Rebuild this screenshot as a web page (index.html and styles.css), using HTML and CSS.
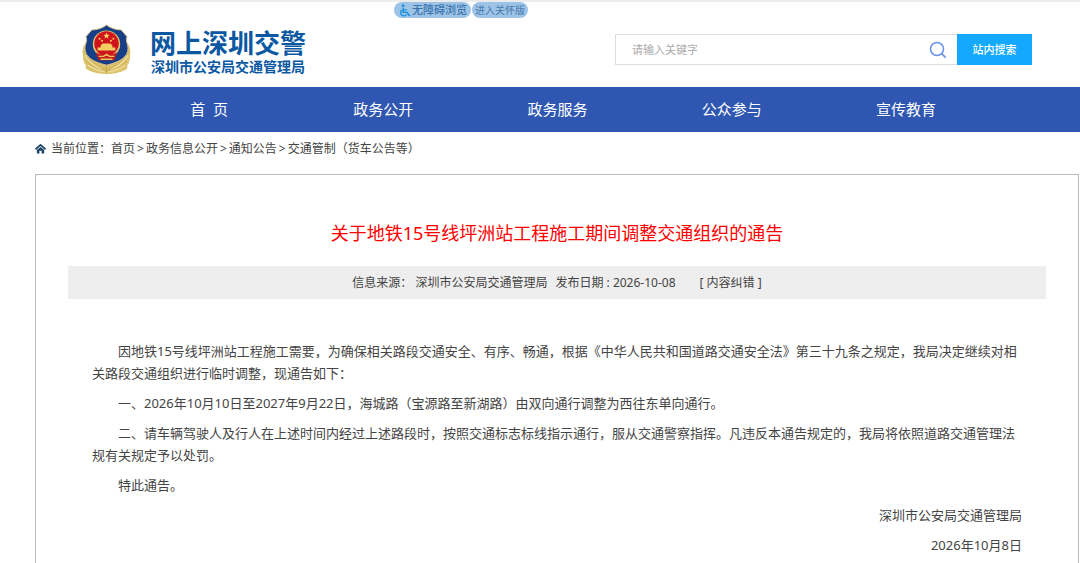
FILE: index.html
```html
<!DOCTYPE html>
<html lang="zh-CN">
<head>
<meta charset="utf-8">
<title>网上深圳交警</title>
<link rel="stylesheet" href="styles.css">
</head>
<body>
<header class="header">
  <div class="tools">
    <button class="pill pill-main" type="button">
      <svg class="pill-icon" viewBox="0 0 12 14" aria-hidden="true">
        <circle cx="4" cy="1.8" r="1.5" fill="#1590e0"/>
        <path d="M4 4v5h4.5l1.7 3.3 1.4-.6M4.3 6.3h3.5" fill="none" stroke="#1590e0" stroke-width="1.5"/>
        <path d="M2.8 6.4a3.5 3.5 0 1 0 5 4.6" fill="none" stroke="#1590e0" stroke-width="1.4"/>
      </svg>无障碍浏览</button>
    <button class="pill" type="button">进入关怀版</button>
  </div>
  <div class="masthead">
    <a class="brand" href="#">
      <svg class="emblem" viewBox="0 0 50 52" aria-hidden="true">
        <path d="M4 19C1 22 0 27 1 32c0 5 1 8 3 10-1 2 0 4 2 5 5 3 12 4 19 4s14-1 19-4c2-1 3-3 2-5 2-2 3-5 3-10 1-5 0-10-3-13z" fill="#dcc36d"/>
        <path d="M3 32c5 8 11 13 22 17 11-4 17-9 22-17M6 42c6 4 12 6 19 7 7-1 13-3 19-7" fill="none" stroke="#efe0a0" stroke-width="1.2"/>
        <path d="M2 28c4 8 12 14 23 18 11-4 19-10 23-18M4 38c6 5 13 9 21 10 8-1 15-5 21-10" fill="none" stroke="#c5a64e" stroke-width=".7"/>
        <path d="M25 1c4 3 9 5 15 5l6 7c-2 4 1 7 1 12 0 9-9 14-22 17C12 39 3 34 3 25c0-5 3-8 1-12l6-7c6 0 11-2 15-5z" fill="#173f88" stroke="#d8c58c" stroke-width="1"/>
        <circle cx="25" cy="20.500" r="14" fill="#e2c66b"/>
        <circle cx="25" cy="20" r="12.500" fill="#cf141d"/>
        <path d="m25 9 .9 2 2.200.2-1.700 1.400.6 2.200-2-1.200-2 1.200.6-2.200-1.700-1.400 2.200-.2z" fill="#ffd95b"/>
        <g fill="#ffd95b"><circle cx="18" cy="15" r="1"/><circle cx="20.500" cy="17" r="1"/><circle cx="29.500" cy="17" r="1"/><circle cx="32" cy="15" r="1"/></g>
        <path d="M19 22l2-2h8l2 2v2h3v3H16v-3h3z" fill="#f3cf61"/>
        <path d="M14 29c6 3 16 3 22 0l-3 8H17z" fill="#c81a1d"/>
        <path d="M17 33h5l3-2 3 2h5M19 36h12" fill="none" stroke="#e8c65f" stroke-width="1.500"/>
        <path d="M25 42v9M20 45l5 4 5-4" fill="none" stroke="#c5a548" stroke-width=".8"/>
      </svg>
      <span class="brand-text">
        <span class="brand-name">网上深圳交警</span>
        <span class="brand-sub">深圳市公安局交通管理局</span>
      </span>
    </a>
    <form class="search" role="search">
      <div class="search-field">
        <input class="search-input" type="text" placeholder="请输入关键字" aria-label="请输入关键字">
        <svg class="search-icon" viewBox="0 0 18 18" aria-hidden="true">
          <circle cx="8" cy="8" r="6.500" fill="none" stroke="#6b92e8" stroke-width="1.500"/>
          <path d="m12.700 12.700 4 4" stroke="#6b92e8" stroke-width="1.700"/>
        </svg>
      </div>
      <button class="search-button" type="button">站内搜索</button>
    </form>
  </div>
</header>
<nav class="nav">
  <a href="#">首&nbsp; 页</a>
  <a href="#">政务公开</a>
  <a href="#">政务服务</a>
  <a href="#">公众参与</a>
  <a href="#">宣传教育</a>
</nav>
<main class="main">
  <div class="crumbs">
    <svg class="home-icon" viewBox="0 0 12 11" aria-hidden="true">
      <path d="M.5 5.800 6 1l5.500 4.800" fill="none" stroke="#1c4567" stroke-width="1.900"/>
      <path d="M2 6.600 6 3.200l4 3.400V10.500H7.200V7.500H4.800v3H2z" fill="#1c4567"/>
    </svg>
    <span>当前位置：</span>
    <a href="#">首页</a><span class="sep">&gt;</span><a href="#">政务信息公开</a><span class="sep">&gt;</span><a href="#">通知公告</a><span class="sep">&gt;</span><a href="#">交通管制（货车公告等）</a>
  </div>
  <article class="article">
    <h1 class="title">关于地铁15号线坪洲站工程施工期间调整交通组织的通告</h1>
    <div class="meta">
      <span>信息来源： 深圳市公安局交通管理局</span>
      <span>发布日期 : 2026-10-08</span>
      <a class="correct" href="#">[ 内容纠错 ]</a>
    </div>
    <div class="content">
      <p>因地铁15号线坪洲站工程施工需要，为确保相关路段交通安全、有序、畅通，根据《中华人民共和国道路交通安全法》第三十九条之规定，我局决定继续对相关路段交通组织进行临时调整，现通告如下：</p>
      <p>一、2026年10月10日至2027年9月22日，海城路（宝源路至新湖路）由双向通行调整为西往东单向通行。</p>
      <p>二、请车辆驾驶人及行人在上述时间内经过上述路段时，按照交通标志标线指示通行，服从交通警察指挥。凡违反本通告规定的，我局将依照道路交通管理法规有关规定予以处罚。</p>
      <p>特此通告。</p>
      <p class="sign">深圳市公安局交通管理局</p>
      <p class="sign">2026年10月8日</p>
    </div>
  </article>
</main>
</body>
</html>
```
FILE: styles.css
```css
* { box-sizing: border-box; }

body {
  margin: 0;
  background: #fff;
  color: #444;
  font: 12px/16px "Noto Sans", "Noto Sans CJK SC", sans-serif;
}

a { color: inherit; text-decoration: none; }
button, input { font-family: inherit; }

.header { border-top: 2px solid #ececec; }

.tools {
  display: flex;
  justify-content: center;
  gap: 1px;
  padding-right: 158px;
}

.pill {
  display: flex;
  align-items: center;
  height: 16px;
  padding: 0 3px;
  border: 0;
  border-radius: 8px;
  background: #9dc3e6;
  color: #4679ac;
  font-size: 10px;
  line-height: 16px;
}

.pill-main {
  padding: 0 4px 0 5px;
  color: #3a74ad;
  font-size: 11px;
  font-weight: 500;
}

.pill-icon { width: 12px; height: 13px; margin-right: 1px; }

.masthead {
  display: flex;
  align-items: center;
  justify-content: space-between;
  height: 69px;
  padding: 0 48px 6px 82px;
}

.brand { display: flex; align-items: center; gap: 19px; }
.emblem { width: 49px; height: 51px; }

.brand-text {
  display: flex;
  flex-direction: column;
  color: #0b58a2;
  font-family: "Noto Sans CJK SC", sans-serif;
  font-weight: 700;
  white-space: nowrap;
}

.brand-name { font-size: 26px; line-height: 32px; }
.brand-sub { padding-left: 1px; font-size: 14px; line-height: 16px; }

.search { display: flex; width: 417px; height: 31px; }

.search-field {
  display: flex;
  flex: 1;
  align-items: center;
  padding: 0 10px 0 16px;
  border: 1px solid #ddd;
  border-right: 0;
}

.search-input {
  flex: 1;
  min-width: 0;
  padding: 0;
  border: 0;
  outline: 0;
  background: none;
  font-size: 11px;
}

.search-input::placeholder { color: #aaa; }
.search-icon { width: 18px; height: 18px; }

.search-button {
  width: 75px;
  padding: 0 0 2px;
  border: 0;
  background: #14a9ff;
  color: #fff;
  font-size: 11px;
  font-weight: 500;
}

.nav {
  display: flex;
  height: 45px;
  padding: 0 87px 0 122px;
  background: #2f57b1;
  color: #fff;
  font-size: 15px;
  line-height: 45px;
  text-align: center;
}

.nav a { flex: 1; white-space: pre; }

.main { padding: 0 1px 0 35px; }

.crumbs {
  display: flex;
  align-items: center;
  height: 42px;
  padding-bottom: 8px;
}

.home-icon { width: 11px; height: 10px; margin-right: 5px; }
.sep { margin: 0 2px; }

.article {
  min-height: 400px;
  padding: 46px 32px 0;
  border: 1px solid #bbb;
  border-bottom: 0;
}

.title {
  margin: 0;
  color: #f00;
  font-size: 18px;
  font-weight: 400;
  line-height: 24px;
  text-align: center;
}

.meta {
  display: flex;
  justify-content: center;
  gap: 8px;
  margin-top: 21px;
  background: #eee;
  line-height: 33px;
}

.correct { margin-left: 16px; }

.content {
  padding: 41px 24px 0;
  font-size: 13px;
  line-height: 22px;
}

.content p { margin: 0 0 8px; text-indent: 2em; }
.content .sign { text-align: right; }
```
